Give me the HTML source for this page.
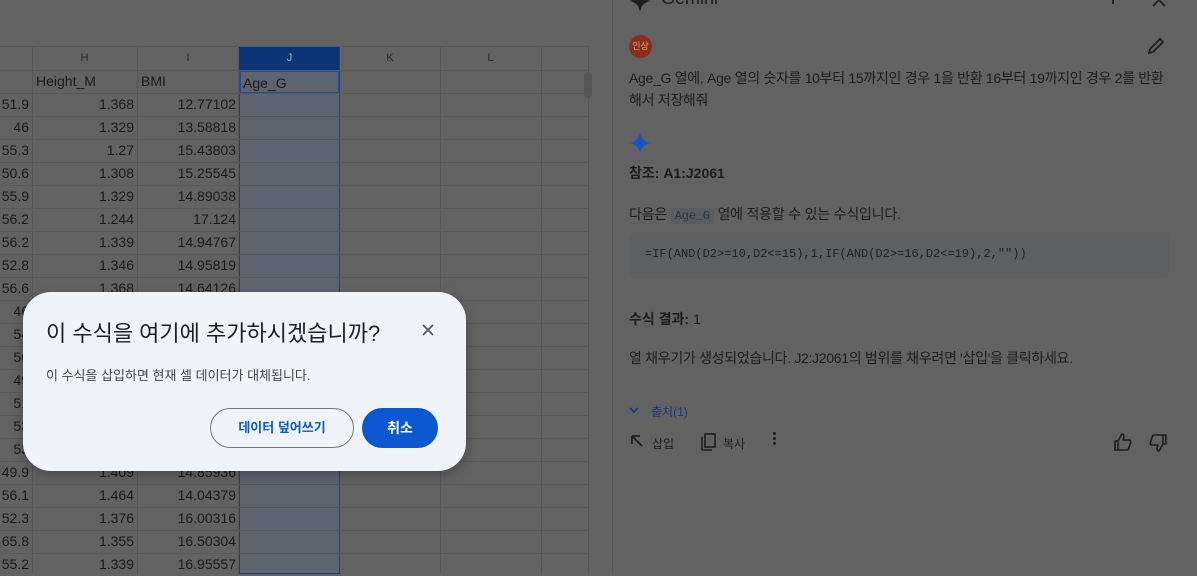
<!DOCTYPE html>
<html><head><meta charset="utf-8"><style>
*{margin:0;padding:0;box-sizing:border-box}
body{width:1197px;height:574px;overflow:hidden;background:#626262;font-family:"Liberation Sans","Noto Sans CJK KR",sans-serif;position:relative;color:#1b1b1b}
.abs{position:absolute}
.vl{position:absolute;top:47px;bottom:0;width:1px;background:#575757}
.hl{position:absolute;left:0;width:589px;height:1px;background:#585858}
.cell{position:absolute;font-size:14px;height:23px;line-height:23px;white-space:nowrap}
.r{text-align:right}
.p{position:absolute;left:629px;font-size:14px;color:#1e1e1e;font-family:"Liberation Sans","Noto Sans CJK KR",sans-serif}
</style></head><body>
<!-- sheet -->
<div class="abs" style="left:0;top:46px;width:589px;height:1px;background:#575757"></div>
<div class="abs" style="left:239px;top:47px;width:101px;height:23px;background:#0b3577"></div>
<div class="abs" style="left:239px;top:70px;width:101px;height:504px;background:#5d636f;border:1px solid #1e3f86;border-top:none"></div>
<div class="abs" style="left:239px;top:70px;width:101px;height:24px;border:2px solid #1e4ea0"></div>
<div class="vl" style="left:32px"></div><div class="vl" style="left:137px"></div><div class="vl" style="left:238px"></div><div class="vl" style="left:339px;background:#1e3f86"></div><div class="vl" style="left:440px"></div><div class="vl" style="left:541px"></div><div class="vl" style="left:588px"></div>
<div class="abs" style="left:584px;top:72px;width:8px;height:26px;border-radius:4px;background:#555"></div>
<div class="cell" style="left:32px;top:47px;width:105px;text-align:center;font-size:11px;color:#2a2a2a">H</div>
<div class="cell" style="left:137px;top:47px;width:102px;text-align:center;font-size:11px;color:#2a2a2a">I</div>
<div class="cell" style="left:239px;top:47px;width:101px;text-align:center;font-size:11px;color:#9fb0cf">J</div>
<div class="cell" style="left:340px;top:47px;width:100px;text-align:center;font-size:11px;color:#2a2a2a">K</div>
<div class="cell" style="left:440px;top:47px;width:101px;text-align:center;font-size:11px;color:#2a2a2a">L</div>
<div class="cell" style="left:36px;top:70px">Height_M</div>
<div class="cell" style="left:141px;top:70px">BMI</div>
<div class="cell" style="left:243px;top:72px">Age_G</div>
<div id="rows"></div>
<script>
var g=["51.9","46","55.3","50.6","55.9","56.2","56.2","52.8","56.6","46","54","56","49","51","53","53","49.9","56.1","52.3","65.8","55.2"];
var h=["1.368","1.329","1.27","1.308","1.329","1.244","1.339","1.346","1.368","1.3","1.3","1.3","1.3","1.3","1.3","1.3","1.409","1.464","1.376","1.355","1.339"];
var b=["12.77102","13.58818","15.43803","15.25545","14.89038","17.124","14.94767","14.95819","14.64126","14.1","14.1","14.1","14.1","14.1","14.1","14.1","14.85936","14.04379","16.00316","16.50304","16.95557"];
var s="";for(var i=0;i<21;i++){var y=93+i*23;
s+='<div class="hl" style="top:'+y+'px"></div>';
s+='<div class="cell r" style="left:0;width:29px;top:'+y+'px">'+g[i]+'</div>';
s+='<div class="cell r" style="left:32px;width:102px;top:'+y+'px">'+h[i]+'</div>';
s+='<div class="cell r" style="left:137px;width:99px;top:'+y+'px">'+b[i]+'</div>';}
s+='<div class="hl" style="top:70px"></div>';
document.getElementById("rows").innerHTML=s;
</script>
<!-- panel -->
<div class="abs" style="left:612px;top:0;width:1px;height:574px;background:#585858"></div>
<svg class="abs" style="left:629px;top:-10px" width="22" height="22" viewBox="0 0 22 22"><path d="M11 0 C12 6 15 10 22 11 C15 12 12 16 11 22 C10 16 7 12 0 11 C7 10 10 6 11 0Z" fill="#1e1e1e"/></svg>
<div class="abs" style="left:661px;top:-12px;font-size:18px;color:#1e1e1e">Gemini</div>
<div class="abs" style="left:1073px;top:-8px;width:4px;height:4px;border-radius:50%;background:#222;box-shadow:0 -6px 0 #222"></div>
<div class="abs" style="left:1112px;top:-4px;width:2px;height:8px;background:#222"></div>
<svg class="abs" style="left:1151px;top:-6px" width="16" height="14" viewBox="0 0 16 14"><path d="M2 0 L14 12 M14 0 L2 12" stroke="#222" stroke-width="1.8"/></svg>
<div class="abs" style="left:629px;top:35px;width:23px;height:23px;border-radius:50%;background:#8a2e1c;color:#d9a090;font-size:9px;line-height:23px;text-align:center">인상</div>
<svg class="abs" style="left:1146px;top:37px" width="20" height="18" viewBox="0 0 20 18"><path d="M3 16 L4 12 L14 2 L17 5 L7 15 Z" fill="none" stroke="#1e1e1e" stroke-width="1.7"/></svg>
<div class="p" style="top:67px;width:560px;line-height:22px;letter-spacing:-0.3px">Age_G 열에, Age 열의 숫자를 10부터 15까지인 경우 1을 반환 16부터 19까지인 경우 2를 반환<br>해서 저장해줘</div>
<svg class="abs" style="left:629px;top:132px" width="22" height="22" viewBox="0 0 22 22"><path d="M11 0 C12 6 15 10 22 11 C15 12 12 16 11 22 C10 16 7 12 0 11 C7 10 10 6 11 0Z" fill="#1a56c2"/></svg>
<div class="p" style="top:163px;font-weight:bold">참조: A1:J2061</div>
<div class="p" style="top:204px;letter-spacing:-0.2px">다음은 <span style="background:#595d62;font-family:'Liberation Mono',monospace;font-size:12px;padding:1px 4px;color:#333">Age_G</span> 열에 적용할 수 있는 수식입니다.</div>
<div class="abs" style="left:629px;top:232px;width:540px;height:47px;background:#5d5f61;border-radius:6px"></div>
<div class="p" style="left:645px;top:247px;font-family:'Liberation Mono',monospace;font-size:12px;color:#222">=IF(AND(D2&gt;=10,D2&lt;=15),1,IF(AND(D2&gt;=16,D2&lt;=19),2,""))</div>
<div class="p" style="top:309px"><b>수식 결과:</b> 1</div>
<div class="p" style="top:348px;letter-spacing:-0.3px">열 채우기가 생성되었습니다. J2:J2061의 범위를 채우려면 '삽입'을 클릭하세요.</div>
<svg class="abs" style="left:629px;top:406px" width="10" height="8" viewBox="0 0 10 8"><path d="M1 2 L5 6 L9 2" fill="none" stroke="#1a3a6a" stroke-width="1.6"/></svg>
<div class="p" style="left:651px;top:403px;font-size:12px;color:#1a3a6a">출처(1)</div>
<svg class="abs" style="left:630px;top:434px" width="14" height="14" viewBox="0 0 14 14"><path d="M2 2 L12 12 M2 2 L2 10 M2 2 L10 2" fill="none" stroke="#1e1e1e" stroke-width="1.7"/></svg>
<div class="p" style="left:652px;top:435px;font-size:12px">삽입</div>
<svg class="abs" style="left:700px;top:433px" width="16" height="18" viewBox="0 0 16 18"><rect x="5" y="1" width="10" height="13" fill="none" stroke="#1e1e1e" stroke-width="1.6"/><path d="M2 4 L2 17 L12 17" fill="none" stroke="#1e1e1e" stroke-width="1.6"/></svg>
<div class="p" style="left:723px;top:435px;font-size:12px">복사</div>
<div class="abs" style="left:773px;top:437px;width:3px;height:3px;border-radius:50%;background:#222;box-shadow:0 -5px 0 #222,0 5px 0 #222"></div>
<svg class="abs" style="left:1113px;top:432px" width="20" height="20" viewBox="0 0 20 20"><path d="M2 9 H5 V18 H2 Z M5 9 L9 2 Q11 2 11 5 L10 8 H17 Q18 9 17.5 11 L15.5 17 Q15 18 14 18 H5" fill="none" stroke="#1e1e1e" stroke-width="1.6" stroke-linejoin="round"/></svg>
<svg class="abs" style="left:1148px;top:433px" width="20" height="20" viewBox="0 0 20 20"><g transform="rotate(180 10 10)"><path d="M2 9 H5 V18 H2 Z M5 9 L9 2 Q11 2 11 5 L10 8 H17 Q18 9 17.5 11 L15.5 17 Q15 18 14 18 H5" fill="none" stroke="#1e1e1e" stroke-width="1.6" stroke-linejoin="round"/></g></svg>
<!-- dialog -->
<div class="abs" style="left:23px;top:292px;width:443px;height:179px;background:#f0f4f9;border-radius:28px;box-shadow:0 4px 12px rgba(0,0,0,.25)"></div>
<div class="abs" style="left:46px;top:316px;font-size:22px;color:#1f1f1f">이 수식을 여기에 추가하시겠습니까?</div>
<svg class="abs" style="left:422px;top:324px" width="12" height="12" viewBox="0 0 12 12"><path d="M1 1 L11 11 M11 1 L1 11" stroke="#555" stroke-width="1.6"/></svg>
<div class="abs" style="left:46px;top:365px;font-size:13px;color:#444">이 수식을 삽입하면 현재 셀 데이터가 대체됩니다.</div>
<div class="abs" style="left:210px;top:408px;width:144px;height:40px;border:1px solid #747775;border-radius:20px;text-align:center;line-height:38px;font-size:13px;color:#0b57d0;font-weight:bold">데이터 덮어쓰기</div>
<div class="abs" style="left:362px;top:408px;width:76px;height:40px;background:#0b57d0;border-radius:20px;text-align:center;line-height:40px;font-size:14px;color:#fff;font-weight:bold">취소</div>
</body></html>
